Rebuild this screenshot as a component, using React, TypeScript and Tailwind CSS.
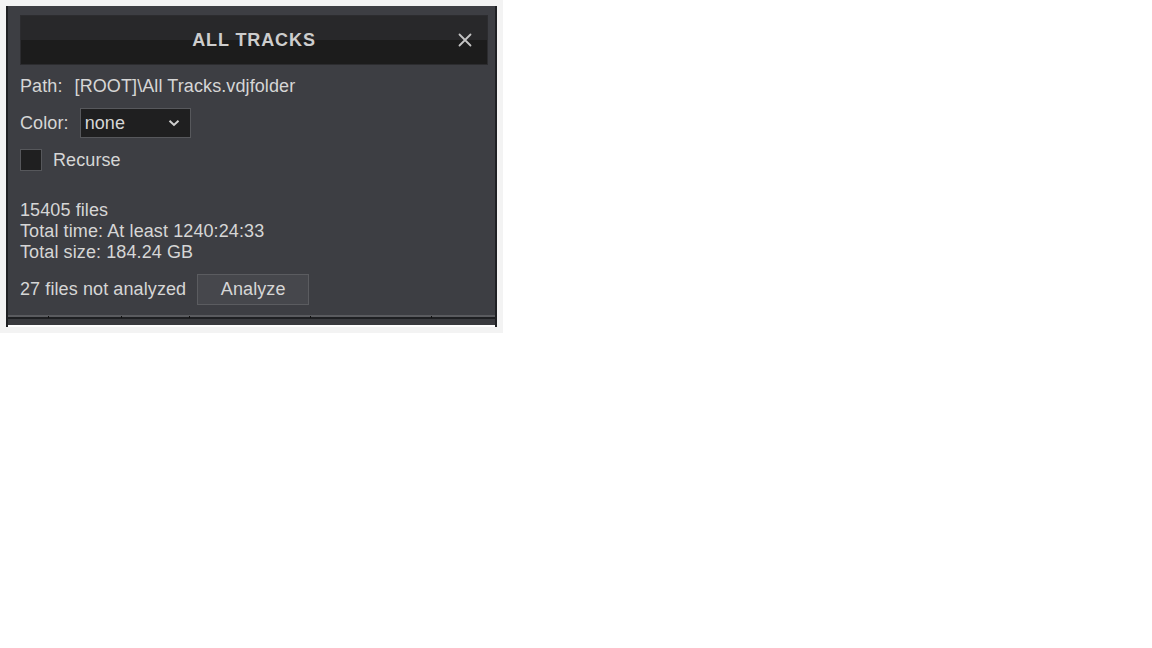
import React from 'react';

const font = { fontFamily: '"Liberation Sans", Arial, sans-serif' };

export default function App() {
    return (
        <div className="min-h-screen bg-white" style={font}>
            {/* light frame around the captured dialog */}
            <div className="w-[503px] h-[333px] bg-[#f3f3f3] p-[6px]">
                <FolderInfo />
            </div>
        </div>
    );
}

function FolderInfo() {
    return (
        <div className="w-[491px] h-[321px] flex flex-col bg-[#3d3e43] border-l-2 border-r-2 border-[#1f2023] text-[#d6d6d6] text-[18px] leading-[21px] tracking-[0.1px]">
            <div className="flex-1 pt-[9px] pl-[12px] pr-[7px]">
                {/* Title bar */}
                <div className="relative h-[50px] flex items-center justify-center bg-[linear-gradient(to_bottom,#28282a_0,#28282a_50%,#1c1c1c_50%,#1c1c1c_100%)] border border-[#2c2c2f]">
                    <span className="font-bold text-[18px] tracking-[0.9px] text-[#cdcdcd]">ALL TRACKS</span>
                    <svg className="absolute right-[15px] top-[17px]" width="14" height="14" viewBox="0 0 14 14">
                        <path d="M1.5 1.5 L12.5 12.5 M12.5 1.5 L1.5 12.5" stroke="#c4c4c4" strokeWidth="1.8" strokeLinecap="round" />
                    </svg>
                </div>

                {/* Path */}
                <div className="mt-[11px] flex h-[21px] items-center">
                    <span>Path:</span>
                    <span className="ml-[12px]">[ROOT]\All Tracks.vdjfolder</span>
                </div>

                {/* Color */}
                <div className="mt-[11px] flex items-center h-[30px]">
                    <span>Color:</span>
                    <div className="ml-[11px] w-[111px] h-[30px] flex items-center justify-between bg-[#1f1f20] border border-[#57585c] pl-[4px] pr-[10px]">
                        <span>none</span>
                        <svg width="12" height="8" viewBox="0 0 12 8">
                            <path d="M1.5 1.8 L6 6 L10.5 1.8" stroke="#d0d0d0" strokeWidth="2" fill="none" />
                        </svg>
                    </div>
                </div>

                {/* Recurse */}
                <div className="mt-[11px] flex items-center h-[22px]">
                    <div className="w-[22px] h-[22px] bg-[#1f1f20] border border-[#56575b]" />
                    <span className="ml-[11px]">Recurse</span>
                </div>

                {/* Stats */}
                <div className="mt-[29px]">
                    <div>15405 files</div>
                    <div>Total time: At least 1240:24:33</div>
                    <div>Total size: 184.24 GB</div>
                </div>

                {/* Analyze */}
                <div className="mt-[11px] flex items-center h-[31px]">
                    <span>27 files not analyzed</span>
                    <button className="ml-[11px] w-[112px] h-[31px] bg-[#46474c] border border-[#5b5c60] text-[#d6d6d6] text-[18px] tracking-[0.1px]">
                        Analyze
                    </button>
                </div>
            </div>

            {/* table header edge below the dialog */}
            <div className="h-[2px] bg-[#5a5b5f]" />
            <div className="relative h-[2px] bg-[#1e1f22]">
                <span className="absolute left-[40px] -top-[1px] w-[1px] h-[2px] bg-[#111]" />
                <span className="absolute left-[113px] -top-[1px] w-[1px] h-[2px] bg-[#111]" />
                <span className="absolute left-[181px] -top-[1px] w-[1px] h-[2px] bg-[#111]" />
                <span className="absolute left-[302px] -top-[1px] w-[1px] h-[2px] bg-[#111]" />
                <span className="absolute left-[423px] -top-[1px] w-[1px] h-[2px] bg-[#111]" />
            </div>
            <div className="h-[6px] bg-[#393a3e]" />
            <div className="h-[2px] bg-white" />
        </div>
    );
}
